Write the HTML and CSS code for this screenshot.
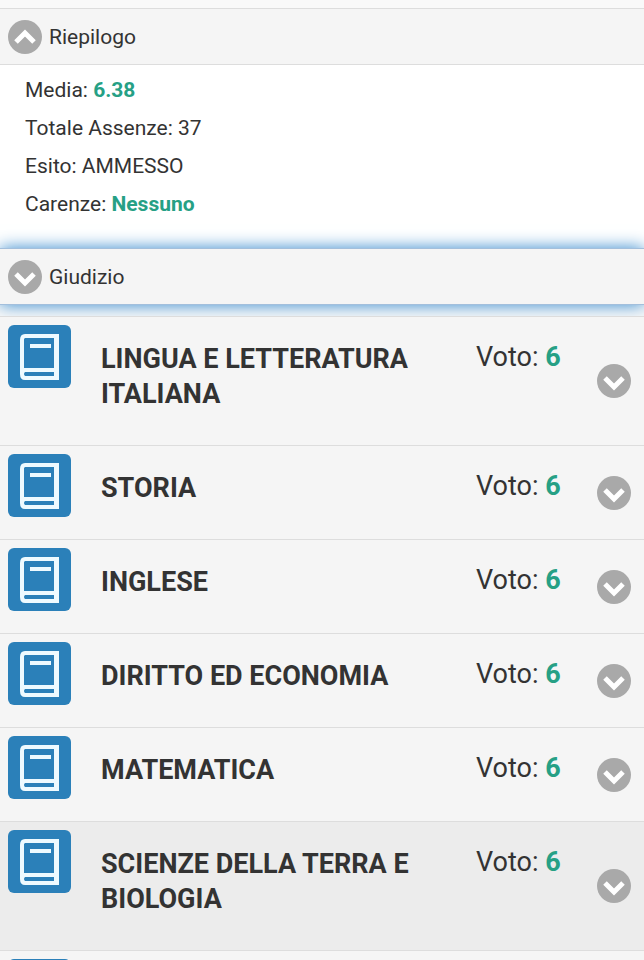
FILE: index.html
```
<!DOCTYPE html>
<html lang="it">
  <head>
    <meta charset="UTF-8" />
    <meta name="viewport" content="width=device-width, initial-scale=1.0" />
    <title>Scrutinio</title>
    <link rel="stylesheet" href="styles.css">
  </head>
  <body>
    <!-- shared icons -->
    <svg class="sprite" aria-hidden="true">
      <symbol id="book" viewBox="0 0 63 63">
        <path d="M17 9H51V55H17Q12 55 12 49V15Q12 9 17 9Z" fill="#eefaff" />
        <path d="M17 13H46V43H16V14Z" fill="#2b80b9" />
        <path d="M17 47H46V51H17Q15 49 17 47Z" fill="#2b80b9" />
        <path d="M22 21H43" stroke="#eefaff" stroke-width="4" />
      </symbol>
      <symbol id="down" viewBox="0 0 34 34">
        <circle cx="17" cy="17" r="17" fill="#a9a9a9" />
        <path d="M8 14L17 23L26 14" fill="none" stroke="#fff" stroke-width="5" />
      </symbol>
      <symbol id="up" viewBox="0 0 34 34">
        <circle cx="17" cy="17" r="17" fill="#a9a9a9" />
        <path d="M8 22L17 13L26 22" fill="none" stroke="#fff" stroke-width="5" />
      </symbol>
    </svg>

    <main>
      <button class="section-header" type="button" aria-expanded="true">
        <svg class="arrow"><use href="#up" /></svg>
        Riepilogo
      </button>
      <div class="summary">
        <p>Media: <b>6.38</b></p>
        <p>Totale Assenze: 37</p>
        <p>Esito: AMMESSO</p>
        <p>Carenze: <b>Nessuno</b></p>
      </div>

      <button class="section-header focused" type="button" aria-expanded="false">
        <svg class="arrow"><use href="#down" /></svg>
        Giudizio
      </button>

      <div class="subjects">
        <button class="subject" type="button">
          <svg class="book"><use href="#book" /></svg>
          <strong class="name">LINGUA E LETTERATURA ITALIANA</strong>
          <span class="grade">Voto: <b>6</b></span>
          <svg class="arrow"><use href="#down" /></svg>
        </button>
        <button class="subject" type="button">
          <svg class="book"><use href="#book" /></svg>
          <strong class="name">STORIA</strong>
          <span class="grade">Voto: <b>6</b></span>
          <svg class="arrow"><use href="#down" /></svg>
        </button>
        <button class="subject" type="button">
          <svg class="book"><use href="#book" /></svg>
          <strong class="name">INGLESE</strong>
          <span class="grade">Voto: <b>6</b></span>
          <svg class="arrow"><use href="#down" /></svg>
        </button>
        <button class="subject" type="button">
          <svg class="book"><use href="#book" /></svg>
          <strong class="name">DIRITTO ED ECONOMIA</strong>
          <span class="grade">Voto: <b>6</b></span>
          <svg class="arrow"><use href="#down" /></svg>
        </button>
        <button class="subject" type="button">
          <svg class="book"><use href="#book" /></svg>
          <strong class="name">MATEMATICA</strong>
          <span class="grade">Voto: <b>6</b></span>
          <svg class="arrow"><use href="#down" /></svg>
        </button>
        <button class="subject active" type="button">
          <svg class="book"><use href="#book" /></svg>
          <strong class="name">SCIENZE DELLA TERRA E BIOLOGIA</strong>
          <span class="grade">Voto: <b>6</b></span>
          <svg class="arrow"><use href="#down" /></svg>
        </button>
        <div class="subject">
          <svg class="book"><use href="#book" /></svg>
        </div>
      </div>
    </main>
  </body>
</html>
```
FILE: styles.css
```
* {
  box-sizing: border-box;
}

body {
  margin: 0;
  height: 100vh;
  overflow: hidden;
  background-color: #f9f9f9;
  color: #333;
  font-family: Roboto, sans-serif;
  font-size: 21px;
}

button {
  width: 100%;
  margin: 0;
  border: none;
  color: inherit;
  font: inherit;
  text-align: left;
  cursor: pointer;
}

b {
  color: #26a085;
}

.sprite {
  display: none;
}

main {
  padding-top: 8px;
}

.section-header {
  display: flex;
  align-items: center;
  gap: 7px;
  height: 57px;
  padding: 0 8px;
  background-color: #f5f5f5;
  border-top: 1px solid #ddd;
  border-bottom: 1px solid #ddd;
}

.arrow {
  flex: none;
  width: 34px;
  height: 34px;
}

.summary {
  padding: 6px 25px 25px;
  background-color: #fff;
}

.summary p {
  margin: 0;
  line-height: 38px;
}

/* Focus glow, the list below covers its lower part */
.focused {
  position: relative;
  border-color: #a3bfdc;
  box-shadow: 0 0 16px #3388cc;
  outline: none;
}

.subjects {
  position: relative;
  margin-top: 11px;
}

.subject {
  display: grid;
  grid-template-columns: 63px 1fr 121px 34px;
  align-items: start;
  padding: 8px 13px 8px 8px;
  background-color: #f5f5f5;
  border-top: 1px solid #ddd;
  font-size: 27px;
  line-height: 35px;
}

.subject.active {
  background-color: #ececec;
}

.book {
  width: 63px;
  height: 63px;
  border-radius: 6px;
  background-color: #2b80b9;
}

.name {
  padding: 17px 30px 25px;
}

.grade {
  padding-top: 15px;
}

.subject .arrow {
  align-self: center;
}
```
